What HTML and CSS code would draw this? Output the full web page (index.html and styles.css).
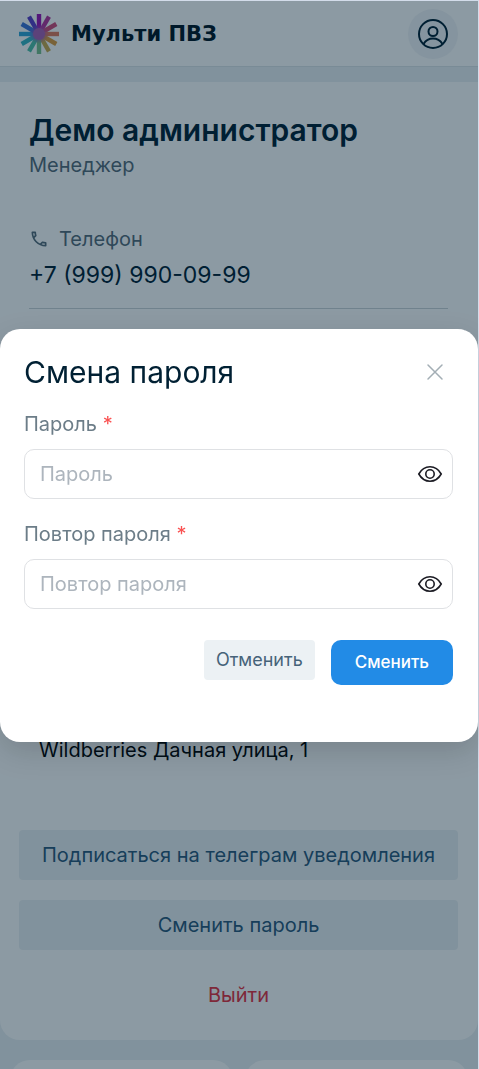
FILE: index.html
```
<!DOCTYPE html>
<html lang="ru">

<head>
    <meta charset="UTF-8">
    <meta name="viewport" content="width=device-width, initial-scale=1.0">
    <title>Мульти ПВЗ</title>
    <link rel="stylesheet" href="styles.css">
</head>

<body class="modal-open">
    <header class="header">
        <a href="#" class="logo">
            <svg class="logo-icon" viewBox="-20 -20 40 40" aria-hidden="true">
                <defs>
                    <radialGradient id="core">
                        <stop offset="0.1" stop-color="#a050b8" />
                        <stop offset="0.7" stop-color="#a050b8" stop-opacity="0" />
                    </radialGradient>
                </defs>
                <g stroke-width="4.4">
                    <path stroke="#9a12b4" d="M0-4V-20" />
                    <path stroke="#b4329c" d="M2-3.5L10-17.3" />
                    <path stroke="#d04a78" d="M3.5-2L17.3-10" />
                    <path stroke="#e0785c" d="M4 0H20" />
                    <path stroke="#dc9a3c" d="M3.5 2L17.3 10" />
                    <path stroke="#c8a84c" d="M2 3.5L10 17.3" />
                    <path stroke="#78c08c" d="M0 4V20" />
                    <path stroke="#50c0a8" d="M-2 3.5L-10 17.3" />
                    <path stroke="#38b4c4" d="M-3.5 2L-17.3 10" />
                    <path stroke="#30a4d8" d="M-4 0H-20" />
                    <path stroke="#3c74d8" d="M-3.5-2L-17.3-10" />
                    <path stroke="#5a3cc8" d="M-2-3.5L-10-17.3" />
                </g>
                <circle r="14" fill="url(#core)" />
                <circle r="6" fill="#a860b4" />
            </svg>
            <span>Мульти ПВЗ</span>
        </a>
        <button type="button" class="user-button" aria-label="Профиль">
            <svg width="32" height="32" viewBox="0 0 32 32" fill="none" stroke="currentColor" stroke-width="2">
                <circle cx="16" cy="16" r="14" />
                <circle cx="16" cy="13.5" r="4.5" />
                <path d="M6.5 26C9 22 12 20.5 16 20.5S23 22 25.5 26" />
            </svg>
        </button>
    </header>

    <main class="content">
        <section class="profile">
            <div class="profile-info">
                <h1>Демо администратор</h1>
                <p class="role">Менеджер</p>
                <div class="contact">
                    <p class="contact-label">
                        <svg width="20" height="20" viewBox="0 0 24 24" fill="currentColor" aria-hidden="true">
                            <path d="M6.54 5c.06.89.21 1.76.45 2.59l-1.2 1.2c-.41-1.2-.67-2.47-.76-3.79h1.51m9.86 12.02c.85.24 1.72.39 2.6.45v1.49c-1.32-.09-2.59-.35-3.8-.75l1.2-1.19M7.5 3H4c-.55 0-1 .45-1 1 0 9.39 7.61 17 17 17 .55 0 1-.45 1-1v-3.49c0-.55-.45-1-1-1-1.24 0-2.45-.2-3.57-.57-.1-.04-.21-.05-.31-.05-.26 0-.51.1-.71.29l-2.2 2.2c-2.83-1.45-5.15-3.76-6.59-6.59l2.2-2.2c.28-.28.36-.67.25-1.02C8.7 6.45 8.5 5.25 8.5 4c0-.55-.45-1-1-1z" />
                        </svg>
                        <span>Телефон</span>
                    </p>
                    <p class="contact-value">+7 (999) 990-09-99</p>
                </div>
            </div>
            <p class="address">Wildberries Дачная улица, 1</p>
            <div class="profile-actions">
                <button type="button" class="button">Подписаться на телеграм уведомления</button>
                <button type="button" class="button">Сменить пароль</button>
                <button type="button" class="button button-logout">Выйти</button>
            </div>
        </section>
        <div class="tiles">
            <div class="tile"></div>
            <div class="tile"></div>
        </div>
    </main>

    <div class="overlay">
        <div class="modal" role="dialog" aria-labelledby="modalTitle">
            <div class="modal-header">
                <h2 id="modalTitle">Смена пароля</h2>
                <button type="button" class="icon-button close" aria-label="Закрыть">
                    <svg width="20" height="20" viewBox="0 0 20 20" stroke="currentColor" stroke-width="1.5" stroke-linecap="round">
                        <path d="M3 3L17 17M17 3L3 17" />
                    </svg>
                </button>
            </div>
            <form class="form">
                <div class="field">
                    <label for="password">Пароль <span class="required">*</span></label>
                    <div class="input-wrap">
                        <input type="password" id="password" placeholder="Пароль" required>
                        <button type="button" class="icon-button" aria-label="Показать пароль">
                            <svg width="26" height="20" viewBox="0 0 26 20" fill="none" stroke="currentColor" stroke-width="1.6">
                                <path d="M1.8 10C4.5 5.2 8.5 2.8 13 2.8S21.5 5.2 24.2 10C21.5 14.8 17.5 17.2 13 17.2S4.5 14.8 1.8 10z" />
                                <circle cx="13" cy="10" r="4.2" />
                            </svg>
                        </button>
                    </div>
                </div>
                <div class="field">
                    <label for="passwordRepeat">Повтор пароля <span class="required">*</span></label>
                    <div class="input-wrap">
                        <input type="password" id="passwordRepeat" placeholder="Повтор пароля" required>
                        <button type="button" class="icon-button" aria-label="Показать пароль">
                            <svg width="26" height="20" viewBox="0 0 26 20" fill="none" stroke="currentColor" stroke-width="1.6">
                                <path d="M1.8 10C4.5 5.2 8.5 2.8 13 2.8S21.5 5.2 24.2 10C21.5 14.8 17.5 17.2 13 17.2S4.5 14.8 1.8 10z" />
                                <circle cx="13" cy="10" r="4.2" />
                            </svg>
                        </button>
                    </div>
                </div>
                <div class="form-actions">
                    <button type="button" class="cancel">Отменить</button>
                    <button type="submit" class="submit">Сменить</button>
                </div>
            </form>
        </div>
    </div>
</body>

</html>
```
FILE: styles.css
```
* {
    box-sizing: border-box;
}

body {
    margin: 0;
    border: 0 solid #d3dcea;
    border-width: 1px 1px 0 0;
    background-color: #ecf1f4;
    color: #002033;
    font-family: Inter, "Liberation Sans", sans-serif;
    font-size: 20px;
    font-weight: 400;
    line-height: 28px;
}

/* page scroll is locked while the dialog is open */
.modal-open {
    display: flex;
    flex-direction: column;
    height: 100vh;
    overflow: hidden;
}

h1,
h2,
p {
    margin: 0;
}

button,
input {
    font: inherit;
    color: inherit;
}

button {
    padding: 0;
    border: none;
    background: none;
    cursor: pointer;
}

svg {
    display: block;
}

.header {
    display: flex;
    flex-shrink: 0;
    justify-content: space-between;
    align-items: center;
    height: 66px;
    padding: 0 20px 0 19px;
    background-color: #fff;
    border-bottom: 1px solid #dde3e7;
}

.logo {
    display: flex;
    align-items: center;
    gap: 12px;
    color: #001424;
    font-family: "DejaVu Sans", sans-serif;
    font-size: 21px;
    font-weight: 700;
    line-height: 30px;
    text-decoration: none;
}

.logo-icon {
    width: 40px;
    height: 40px;
}

.user-button {
    display: flex;
    justify-content: center;
    align-items: center;
    width: 50px;
    height: 50px;
    border-radius: 50%;
    background-color: #f3f5f7;
}

.content {
    flex: 1;
    min-height: 0;
    padding-top: 15px;
    overflow: hidden;
}

.profile {
    padding: 29px 20px 20px 19px;
    background-color: #fff;
    border-radius: 0 0 20px 20px;
}

.profile-info {
    padding: 0 10px;
}

h1 {
    font-size: 30px;
    font-weight: 600;
    line-height: 38px;
}

.role,
.contact-label {
    color: #566b78;
}

.role {
    margin-top: 2px;
}

.contact {
    padding: 46px 0 17px;
    border-bottom: 1px solid #ccd4d8;
}

.contact-label {
    display: flex;
    align-items: center;
    gap: 10px;
}

.contact-value {
    margin-top: 6px;
    font-size: 23px;
    line-height: 32px;
}

.address {
    padding: 427px 20px 0;
    color: #000;
}

.profile-actions {
    display: flex;
    flex-direction: column;
    gap: 20px;
    margin-top: 66px;
}

.button {
    height: 50px;
    border-radius: 4px;
    background-color: #ecf1f4;
    color: #2b587a;
}

.button-logout {
    background: none;
    color: #e5303e;
}

.tiles {
    display: flex;
    gap: 12px;
    padding: 20px 10px;
}

.tile {
    flex: 1;
    height: 120px;
    border-radius: 20px;
    background-color: #fff;
}

.overlay {
    position: fixed;
    inset: 1px 1px 0 0;
    display: flex;
    align-items: center;
    background-color: rgba(0, 32, 51, 0.45);
}

.modal {
    width: 100%;
    padding: 24px 25px 57px 24px;
    border-radius: 20px;
    background-color: #fff;
    box-shadow: 0 10px 30px rgba(0, 0, 0, 0.15);
}

.modal-header {
    display: flex;
    justify-content: space-between;
    align-items: center;
}

h2 {
    font-size: 30px;
    font-weight: 400;
    line-height: 38px;
}

.icon-button {
    display: flex;
    color: #1c1c24;
}

.close {
    margin-right: 8px;
    color: #a3aeb5;
}

.form {
    display: flex;
    flex-direction: column;
    gap: 22px;
    margin-top: 20px;
}

.field label {
    display: block;
    margin-bottom: 12px;
    color: #6c7d88;
    line-height: 26px;
}

.required {
    color: #fa5252;
}

.input-wrap {
    display: flex;
    align-items: center;
    height: 50px;
    padding: 0 9px 0 15px;
    border: 1px solid #dfe1e4;
    border-radius: 10px;
}

.input-wrap input {
    flex: 1;
    min-width: 0;
    padding: 0;
    border: none;
    outline: none;
    background: none;
}

.input-wrap input::placeholder {
    color: #adb5bd;
    opacity: 1;
}

.form-actions {
    display: flex;
    justify-content: flex-end;
    align-items: flex-start;
    gap: 16px;
    padding-top: 9px;
}

.cancel {
    height: 40px;
    padding: 0 12px;
    border-radius: 4px;
    background-color: #ecf1f4;
    color: #466379;
    font-size: 18px;
}

.submit {
    height: 45px;
    padding: 0 24px;
    border-radius: 10px;
    background-color: #228be6;
    color: #fff;
    font-size: 17px;
    font-weight: 500;
}
```
